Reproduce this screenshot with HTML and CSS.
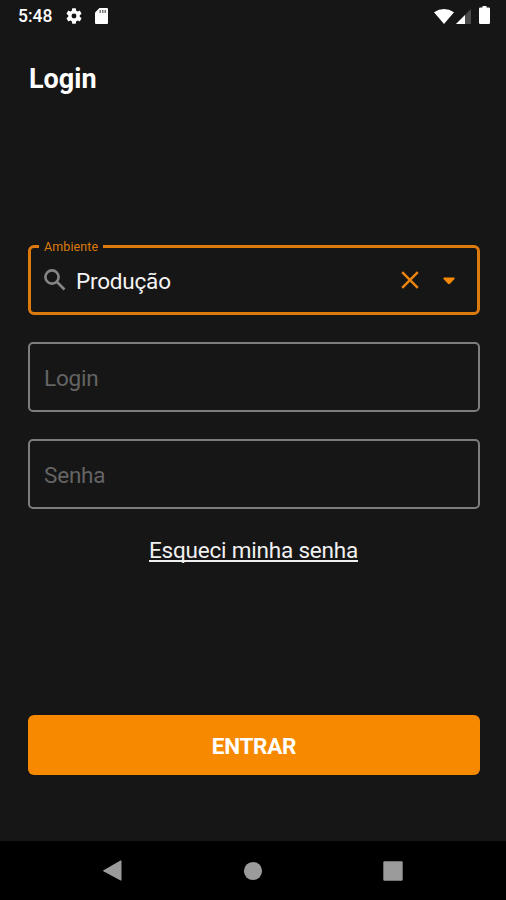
FILE: index.html
```html
<!DOCTYPE html>
<html lang="pt-BR">
<head>
<meta charset="utf-8">
<title>Login</title>
<link rel="stylesheet" href="styles.css">
</head>
<body>
<div class="screen">
  <header class="status">
    <span class="clock">5:48</span>
    <svg class="gear" viewBox="2 2 20 20"><path fill-rule="evenodd" d="M19.14 12.94a7 7 0 0 0 0-1.88l2.03-1.58a.5.5 0 0 0 .12-.61l-1.92-3.32a.5.5 0 0 0-.59-.22l-2.39.96a7 7 0 0 0-1.62-.94l-.36-2.54a.5.5 0 0 0-.48-.41h-3.84a.5.5 0 0 0-.47.41l-.36 2.54a7 7 0 0 0-1.62.94l-2.39-.96a.5.5 0 0 0-.59.22L2.74 8.87a.5.5 0 0 0 .12.61l2.03 1.58a7 7 0 0 0 0 1.88l-2.03 1.58a.5.5 0 0 0-.12.61l1.92 3.32c.12.22.37.29.59.22l2.39-.96a7 7 0 0 0 1.62.94l.36 2.54c.05.24.24.41.48.41h3.84c.24 0 .44-.17.47-.41l.36-2.54a7 7 0 0 0 1.62-.94l2.39.96c.22.08.47 0 .59-.22l1.92-3.32a.5.5 0 0 0-.12-.61zM12 15.1a3.1 3.1 0 1 1 0-6.2 3.1 3.1 0 0 1 0 6.2z"/></svg>
    <svg class="card" viewBox="0 0 13 16"><path d="M4.5 0H12a1 1 0 0 1 1 1v14a1 1 0 0 1-1 1H1a1 1 0 0 1-1-1V4.5z"/><path class="slots" d="M4.5 2H6v3H4.5zM7 2h1.5v3H7zM9.5 2H11v3H9.5z"/></svg>
    <svg class="wifi" viewBox="0 0 20 15"><path d="M0 3.2Q10-3.2 20 3.2L10 15z"/></svg>
    <svg class="signal" viewBox="0 0 15 15"><path class="dim" d="M15 0v15H0z"/><path d="M9 6v9H0z"/></svg>
    <svg class="battery" viewBox="0 0 11 18"><path d="M3.5 0h4v1.6h2.3A1.2 1.2 0 0 1 11 2.8v14a1.2 1.2 0 0 1-1.2 1.2H1.2A1.2 1.2 0 0 1 0 16.8v-14a1.2 1.2 0 0 1 1.2-1.2h2.3z"/></svg>
  </header>
  <main class="content">
    <h1 class="title">Login</h1>
    <form class="form">
      <div class="field active">
        <span class="label">Ambiente</span>
        <svg class="search" viewBox="0 0 22 22"><circle cx="8" cy="8" r="6.6"/><path d="M13 13l7.5 7.5"/></svg>
        <span class="value">Produção</span>
        <svg class="clear" viewBox="0 0 18 18"><path d="M1.2 1.2l15.6 15.6M16.8 1.2L1.2 16.8"/></svg>
        <svg class="caret" viewBox="0 0 12 8"><path d="M1.2.4h9.6q1.4.5.4 1.8L7 6.8q-1 .8-2 0L.8 2.2Q-.2.9 1.2.4z"/></svg>
      </div>
      <div class="field">Login</div>
      <div class="field">Senha</div>
    </form>
    <a class="forgot">Esqueci minha senha</a>
    <div class="submit">ENTRAR</div>
  </main>
  <nav class="navbar">
    <svg viewBox="0 0 20 22"><path d="M.5 10.2L17.5.6q1-.5 1 .7v18.4q0 1.2-1 .7L.5 11.3q-.7-.5 0-1.1z"/></svg>
    <svg viewBox="0 0 20 22"><circle cx="10" cy="11" r="9.1"/></svg>
    <svg viewBox="0 0 20 22"><rect x=".3" y="1.3" width="19.4" height="19.4" rx="1.2"/></svg>
  </nav>
</div>
</body>
</html>
```
FILE: styles.css
```css
* { box-sizing: border-box; }
body { margin: 0; background: #161616; color: #fff; font-family: Roboto, "Liberation Sans", sans-serif; }
svg { display: block; flex: none; fill: #fff; }
.screen { width: 506px; height: 900px; display: flex; flex-direction: column; }
.status { height: 32px; display: flex; align-items: center; padding: 0 16px 0 18px; }
.clock { width: 48px; font-size: 17.5px; font-weight: 500; line-height: 32px; }
.gear { width: 16px; height: 16px; }
.card { width: 13px; height: 16px; margin-left: 13px; }
.slots { fill: #777; }
.wifi { width: 20px; height: 15px; margin-left: auto; }
.signal { width: 15px; height: 15px; margin-left: 2px; }
.dim { fill: #4b4b4b; }
.battery { width: 11px; height: 18px; margin-left: 8px; margin-top: -2px; }
.content { flex: 1; display: flex; flex-direction: column; padding: 30px 26px 0 28px; }
.title { margin: 0 0 0 1px; font-size: 27px; font-weight: 700; line-height: 34px; }
.form { display: grid; gap: 27px; margin-top: 149px; }
.field { position: relative; height: 70px; display: flex; align-items: center; padding: 2px 0 0 14px; border: 2px solid #7d7d7d; border-radius: 5px; color: #646464; font-size: 22.5px; letter-spacing: -0.2px; }
.active { border: 3px solid #dc7b0c; border-radius: 6px; padding: 0 22px 0 13px; color: #f4f4f4; }
.label { position: absolute; left: 8px; top: -8px; padding: 0 5px; background: #161616; color: #dc7b0c; font-size: 12.5px; line-height: 14px; letter-spacing: 0.1px; }
.search { width: 22px; height: 22px; fill: none; stroke: #858585; stroke-width: 2.6; }
.value { margin: 1px auto 0 10px; }
.clear { width: 18px; height: 18px; margin-right: 24px; fill: none; stroke: #ee850c; stroke-width: 2.4; }
.caret { width: 12px; height: 8px; margin-top: 2px; fill: #f78908; }
.forgot { align-self: center; margin: 27px 1px 0 0; color: #f0f0f0; font-size: 22.5px; line-height: 28px; letter-spacing: -0.2px; text-decoration: underline; text-decoration-skip-ink: none; }
.submit { height: 60px; margin-top: 151px; display: flex; align-items: center; justify-content: center; padding-top: 2px; border-radius: 6px; background: #f78901; font-size: 22.5px; font-weight: 700; letter-spacing: -0.3px; }
.navbar { height: 59px; display: flex; justify-content: space-between; align-items: center; padding: 0 103px; background: #000; }
.navbar svg { width: 20px; height: 22px; fill: #9b9b9b; }
```
